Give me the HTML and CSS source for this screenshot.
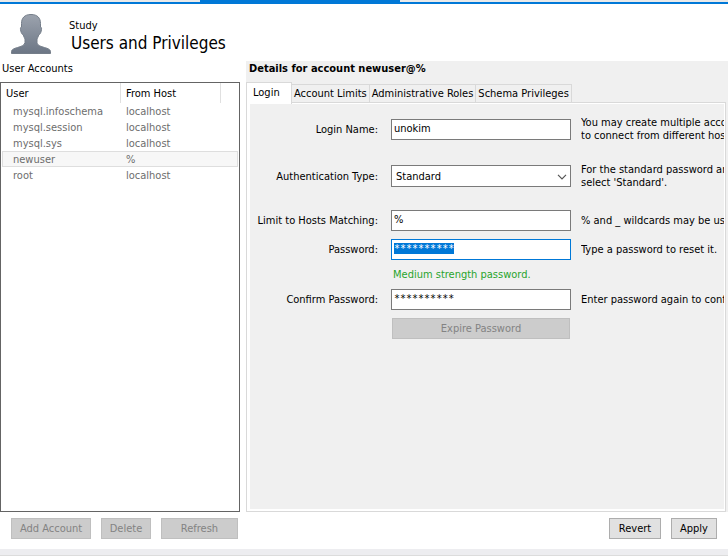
FILE: index.html
```html
<!DOCTYPE html>
<html lang="en">
<head>
<meta charset="utf-8">
<title>Users and Privileges</title>
<link rel="stylesheet" href="styles.css">
</head>
<body>
<div class="tabstrip"><span class="tabstrip-active"></span></div>
<header class="header">
  <svg class="avatar" viewBox="0 0 40 40" aria-hidden="true">
    <defs>
      <linearGradient id="shade" x1="0" y1="0" x2="0" y2="1">
        <stop offset="0" stop-color="#9ca3ae"/>
        <stop offset="1" stop-color="#6c7685"/>
      </linearGradient>
    </defs>
    <path d="M20 .5C13.500 .5 10.500 4 10.500 9.500V13C9.300 13.200 9.200 14.800 9.800 17C10.300 19 11 20.500 12.200 20.800C12.700 22.500 13.500 24 14 25V28.500C13.500 31.500 10 32.500 6.500 33.500C3 34.500 .5 35.500 .5 37.500V39.500H39.500V37.500C39.500 35.500 37 34.500 33.500 33.500C30 32.500 26.500 31.500 26 28.500V25C26.500 24 27.300 22.500 27.800 20.800C29 20.500 29.700 19 30.200 17C30.800 14.800 30.700 13.200 29.500 13V9.500C29.500 4 26.500 .5 20 .5Z" fill="url(#shade)" stroke="#747d89" stroke-width="1"/>
  </svg>
  <div>
    <p class="schema">Study</p>
    <h1 class="title">Users and Privileges</h1>
  </div>
</header>
<main class="main">
  <section class="accounts">
    <h2 class="caption">User Accounts</h2>
    <div class="tree">
      <table>
        <colgroup><col class="col-user"><col class="col-host"><col></colgroup>
        <thead><tr><th>User</th><th>From Host</th><th></th></tr></thead>
        <tbody>
          <tr><td>mysql.infoschema</td><td>localhost</td><td></td></tr>
          <tr><td>mysql.session</td><td>localhost</td><td></td></tr>
          <tr><td>mysql.sys</td><td>localhost</td><td></td></tr>
          <tr class="selected"><td>newuser</td><td>%</td><td></td></tr>
          <tr><td>root</td><td>localhost</td><td></td></tr>
        </tbody>
      </table>
    </div>
  </section>
  <section class="details">
    <h2 class="caption caption-strong">Details for account newuser@%</h2>
    <div class="tabs" role="tablist">
      <button class="tab tab-active" role="tab" aria-selected="true">Login</button>
      <button class="tab" role="tab">Account Limits</button>
      <button class="tab" role="tab">Administrative Roles</button>
      <button class="tab" role="tab">Schema Privileges</button>
    </div>
    <form class="panel">
      <div class="row row-tall">
        <label for="login">Login Name:</label>
        <input class="field" id="login" type="text" value="unokim">
        <p class="hint">You may create multiple accounts<br>to connect from different hosts.</p>
      </div>
      <div class="row row-tall">
        <label for="auth">Authentication Type:</label>
        <div class="select">
          <select class="field" id="auth"><option>Standard</option></select>
          <svg class="chevron" viewBox="0 0 10 6" aria-hidden="true"><path d="M1 .8L5 4.800L9 .8" fill="none" stroke="#555" stroke-width="1.200"/></svg>
        </div>
        <p class="hint">For the standard password and host<br>select 'Standard'.</p>
      </div>
      <div class="group">
        <div class="row">
          <label for="hosts">Limit to Hosts Matching:</label>
          <input class="field" id="hosts" type="text" value="%">
          <p class="hint">% and _ wildcards may be used</p>
        </div>
        <div class="row">
          <label for="password">Password:</label>
          <input class="field secret" id="password" type="text" value="**********">
          <p class="hint">Type a password to reset it.</p>
        </div>
        <div class="row"><p class="strength">Medium strength password.</p></div>
        <div class="row">
          <label for="confirm">Confirm Password:</label>
          <input class="field secret" id="confirm" type="text" value="**********">
          <p class="hint">Enter password again to confirm it.</p>
        </div>
        <div class="row"><button class="button expire" type="button" disabled>Expire Password</button></div>
      </div>
    </form>
  </section>
</main>
<footer class="actions">
  <button class="button w-add" disabled>Add Account</button>
  <button class="button w-delete" disabled>Delete</button>
  <button class="button w-refresh" disabled>Refresh</button>
  <span class="spacer"></span>
  <button class="button w-revert">Revert</button>
  <button class="button w-apply">Apply</button>
</footer>
<div class="statusbar"></div>
<script src="main.js"></script>
</body>
</html>
```
FILE: main.js
```js
const password = document.getElementById("password");
password.focus();
password.select();
```
FILE: styles.css
```css
* { box-sizing: border-box; }

body {
  margin: 0;
  min-height: 100vh;
  display: flex;
  flex-direction: column;
  background: #fff;
  color: #000;
  font: 11px/13px "DejaVu Sans Condensed", "DejaVu Sans", sans-serif;
}

h1, h2, p { margin: 0; font-weight: normal; }
button, input, select { font: inherit; color: inherit; margin: 0; border-radius: 0; }

.tabstrip { height: 4px; background: #e9e9e9; border-bottom: 2px solid #0078d7; display: flex; }
.tabstrip-active { width: 200px; margin-left: 200px; background: #0078d7; }

.header { height: 57px; padding: 10px 11px 0; display: flex; gap: 18px; }
.avatar { width: 40px; height: 40px; }
.schema { padding-top: 5px; }
.title { font-size: 17px; line-height: 22px; padding-left: 2px; }

.main { flex: 1; display: flex; gap: 6px; }
.accounts { width: 240px; flex: none; display: flex; flex-direction: column; }
.caption { font-size: 11px; height: 21px; padding: 1px 2px 0; }
.caption-strong { font-weight: bold; padding-left: 3px; }

.tree { flex: 1; border: 1px solid #646464; padding: 0 1px; }
table { width: 100%; table-layout: fixed; border-collapse: separate; border-spacing: 0; }
.col-user { width: 119px; }
.col-host { width: 100px; }
th { height: 20px; padding: 0 4px; text-align: left; font-weight: normal; border-right: 1px solid #e0e0e0; }
th:last-child { border: 0; }
th:nth-child(2) { padding-left: 5px; }
tbody { color: #6d6d6d; }
td { height: 16px; padding: 0 5px; border: solid transparent; border-width: 1px 0; line-height: 13px; }
td:first-child { padding-left: 11px; }
.selected td { background: #f7f7f7; border-color: #dedede; }
.selected td:first-child { border-left: 1px solid #dedede; padding-left: 10px; }
.selected td:last-child { border-right: 1px solid #dedede; }

.details { flex: 1; min-width: 0; display: flex; flex-direction: column; background: #f0f0f0; padding-right: 2px; }
.tabs { display: flex; align-items: flex-end; height: 20px; }
.tab { height: 18px; padding: 0 2px; border: 1px solid #d9d9d9; border-left: 0; border-bottom: 0; background: #f0f0f0; white-space: nowrap; }
.tab-active { position: relative; z-index: 1; height: 22px; width: 46px; margin-bottom: -2px; padding: 0 0 2px 6px; background: #fff; border-left: 1px solid #d9d9d9; text-align: left; }

.panel {
  flex: 1;
  display: flex;
  flex-direction: column;
  gap: 21px;
  padding: 13px 0 12px;
  border: 1px solid #d9d9d9;
  box-shadow: inset 3px 0 #fff, inset 0 1px #fff, inset -1px -2px #fff;
}
.group { display: flex; flex-direction: column; gap: 8px; }
.row { display: grid; grid-template-columns: 131px 180px 1fr; align-items: center; min-height: 13px; margin-right: 1px; }
.row-tall { min-height: 26px; }
.row label { text-align: right; white-space: nowrap; }
.field { display: block; width: 180px; height: 21px; margin-left: 13px; padding: 0 2px 2px; border: 1px solid #7a7a7a; background: #fff; outline: 0; }
.field:focus { border-color: #0078d7; }
.field::selection { background: #0078d7; color: #fff; }
.secret { font: 10px/15px "DejaVu Sans Mono", "Liberation Mono", monospace; }
.select { position: relative; width: 193px; }
.select .field { appearance: none; height: 22px; padding: 0 4px; }
.chevron { position: absolute; right: 4px; top: 9px; width: 10px; height: 6px; pointer-events: none; }
.hint { margin-left: 23px; white-space: nowrap; overflow: hidden; }
.strength { grid-column: 2; margin-left: 15px; color: #28a42c; white-space: nowrap; }

.button { height: 21px; padding: 0; border: 1px solid #adadad; background: #e1e1e1; white-space: nowrap; }
.button:disabled { background: #ccc; border-color: #bfbfbf; color: #838383; }
.expire { grid-column: 2; width: 178px; margin-left: 14px; }

.actions { display: flex; height: 37px; padding: 6px 11px 0; gap: 10px; }
.spacer { flex: 1; }
.w-add { width: 80px; }
.w-delete { width: 50px; }
.w-refresh { width: 77px; }
.w-revert { width: 52px; }
.w-apply { width: 46px; }
.statusbar { height: 7px; background: #ededf0; border-bottom: 1px solid #dcdcdc; }
```
